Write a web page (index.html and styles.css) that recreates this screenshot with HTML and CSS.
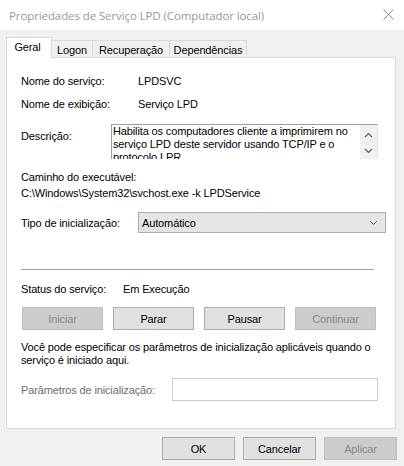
FILE: index.html
```html
<!DOCTYPE html>
<html lang="pt">
<head>
<meta charset="utf-8">
<title>Propriedades de Serviço LPD</title>
<link rel="stylesheet" href="styles.css">
</head>
<body>
<div class="window">
  <div class="titlebar">
    <span class="title">Propriedades de Serviço LPD (Computador local)</span>
    <svg class="close" width="11" height="11" viewBox="0 0 11 11"><path d="M0.5 0.5 L10.5 10.5 M10.5 0.5 L0.5 10.5" stroke="#8c8c8c" stroke-width="1" fill="none"/></svg>
  </div>
  <div class="tabs">
    <div class="tab active">Geral</div>
    <div class="tab t-logon">Logon</div>
    <div class="tab t-rec">Recuperação</div>
    <div class="tab t-dep">Dependências</div>
  </div>
  <div class="panel">
    <div class="row r1"><span class="lbl w117">Nome do serviço:</span><span>LPDSVC</span></div>
    <div class="row r2"><span class="lbl w117">Nome de exibição:</span><span>Serviço LPD</span></div>
    <div class="desc-row">
      <span class="lbl w90 desc-lbl">Descrição:</span>
      <div class="desc-box">
        <div class="desc-text">Habilita os computadores cliente a imprimirem no serviço LPD deste servidor usando TCP/IP e o protocolo LPR.</div>
        <div class="scrollbar">
          <svg width="9" height="6" viewBox="0 0 9 6"><path d="M1 5 L4.5 1.5 L8 5" stroke="#606060" stroke-width="1.2" fill="none"/></svg>
          <svg width="9" height="6" viewBox="0 0 9 6"><path d="M1 1 L4.5 4.5 L8 1" stroke="#606060" stroke-width="1.2" fill="none"/></svg>
        </div>
      </div>
    </div>
    <div class="row r-path-lbl">Caminho do executável:</div>
    <div class="row">C:\Windows\System32\svchost.exe -k LPDService</div>
    <div class="row r-type">
      <span class="lbl w117">Tipo de inicialização:</span>
      <div class="combo">
        <span>Automático</span>
        <svg width="9" height="6" viewBox="0 0 9 6"><path d="M1 1 L4.5 4.5 L8 1" stroke="#707070" stroke-width="1" fill="none"/></svg>
      </div>
    </div>
    <div class="sep"></div>
    <div class="row r-status"><span class="lbl w102">Status do serviço:</span><span>Em Execução</span></div>
    <div class="btn-row">
      <button class="btn disabled">Iniciar</button>
      <button class="btn">Parar</button>
      <button class="btn">Pausar</button>
      <button class="btn disabled">Continuar</button>
    </div>
    <p class="para">Você pode especificar os parâmetros de inicialização aplicáveis quando o<br>serviço é iniciado aqui.</p>
    <div class="row r-param">
      <span class="lbl w151 muted">Parâmetros de inicialização:</span>
      <div class="param-input"></div>
    </div>
  </div>
  <div class="footer">
    <button class="btn fbtn">OK</button>
    <button class="btn fbtn">Cancelar</button>
    <button class="btn fbtn disabled">Aplicar</button>
  </div>
</div>
</body>
</html>
```

FILE: styles.css
```css
* { box-sizing: border-box; }
html, body {
  margin: 0;
  padding: 0;
  width: 404px;
  height: 466px;
  overflow: hidden;
  background: #f0f0f0;
}
body {
  font-family: "Liberation Sans", Arial, sans-serif;
  font-size: 11px;
  letter-spacing: -0.13px;
  color: #000;
}
.window {
  width: 404px;
  height: 466px;
  background: #f0f0f0;
}
.titlebar {
  height: 30px;
  background: #fff;
  display: flex;
  align-items: center;
  justify-content: space-between;
  padding: 0 10px 0 9px;
}
.title {
  font-family: "Open Sans", "Noto Sans", sans-serif;
  font-size: 11.5px;
  color: #999;
  letter-spacing: -0.1px;
}
.close { margin-top: -1px; }

.tabs {
  margin-top: 7px;
  padding-left: 6px;
  height: 21px;
  display: flex;
  align-items: flex-end;
  position: relative;
  z-index: 1;
}
.tab {
  height: 17px;
  margin-bottom: 1px;
  border-top: 1px solid #d9d9d9;
  border-right: 1px solid #d9d9d9;
  background: #f0f0f0;
  display: flex;
  align-items: center;
  justify-content: center;
  padding-top: 1px;
}
.tab.active {
  height: 21px;
  margin-bottom: 0;
  width: 46px;
  background: #fff;
  border-left: 1px solid #d9d9d9;
  padding-top: 0;
  padding-bottom: 3px;
  padding-right: 3px;
}
.t-logon { width: 41px; }
.t-rec { width: 77px; }
.t-dep { width: 77px; }

.panel {
  margin: -1px 0 0 6px;
  width: 390px;
  height: 372px;
  border: 1px solid #d9d9d9;
  background: #fff;
  padding: 15px 0 0 14px;
}
.row {
  display: flex;
  align-items: center;
  height: 16px;
  white-space: nowrap;
}
.lbl { flex: none; }
.w117 { width: 117px; }
.w90 { width: 90px; }
.w102 { width: 102px; }
.w151 { width: 151px; }
.muted { color: #6d6d6d; }
.r2 { margin-top: 7px; }

.desc-row {
  display: flex;
  align-items: flex-start;
  margin-top: 12px;
}
.desc-lbl {
  margin-top: 4px;
  line-height: 16px;
}
.desc-box {
  width: 267px;
  height: 35px;
  border-top: 1px solid #a0a0a0;
  border-left: 1px solid #a0a0a0;
  border-right: 1px solid #e3e3e3;
  display: flex;
  overflow: hidden;
}
.desc-text {
  flex: 1;
  padding: 0 8px 0 1px;
  line-height: 13px;
}
.scrollbar {
  width: 17px;
  flex: none;
  background: #f0f0f0;
  display: flex;
  flex-direction: column;
  align-items: center;
  justify-content: space-between;
  padding: 7px 0 5px;
}

.r-path-lbl { margin-top: 10px; }

.r-type {
  margin-top: 11px;
  height: 21px;
}
.combo {
  width: 248px;
  height: 21px;
  background: #e5e5e5;
  border: 1px solid #adadad;
  display: flex;
  align-items: center;
  justify-content: space-between;
  padding: 0 7px 0 3px;
}

.sep {
  margin-top: 36px;
  width: 353px;
  height: 1px;
  background: #a0a0a0;
}
.r-status { margin-top: 11px; }

.btn {
  font-family: "Liberation Sans", Arial, sans-serif;
  font-size: 11px;
  letter-spacing: -0.13px;
  color: #000;
  height: 23px;
  background: #e1e1e1;
  border: 1px solid #adadad;
  padding: 0;
  margin: 0;
  border-radius: 0;
}
.btn.disabled {
  background: #cccccc;
  border-color: #bfbfbf;
  color: #8a8a8a;
}
.btn-row {
  margin-top: 10px;
  margin-left: 1px;
  display: flex;
  gap: 10px;
}
.btn-row .btn { width: 81px; }

.para {
  margin: 11px 0 0;
  line-height: 13px;
  white-space: nowrap;
}
.r-param {
  margin-top: 11px;
  height: 23px;
}
.param-input {
  width: 206px;
  height: 23px;
  border: 1px solid #cccccc;
  background: #fff;
}

.footer {
  margin-top: 8px;
  padding-right: 7px;
  display: flex;
  justify-content: flex-end;
  gap: 8px;
}
.fbtn { width: 73px; }
```
